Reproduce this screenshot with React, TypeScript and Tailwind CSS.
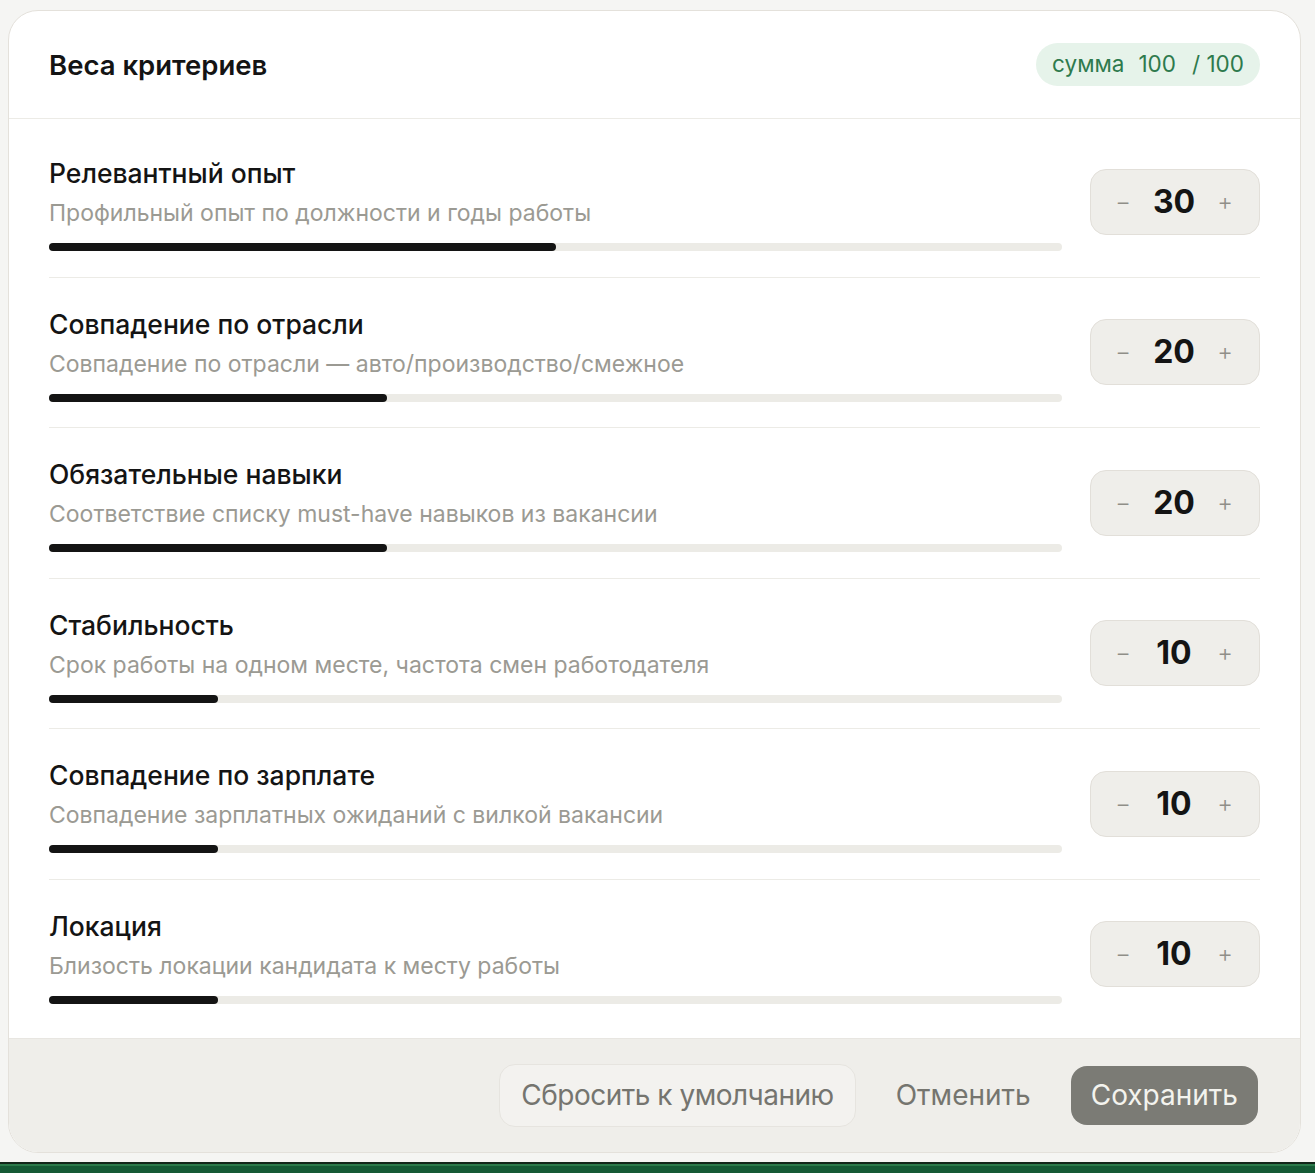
import React from "react";

const rows = [
  { title: "Релевантный опыт", desc: "Профильный опыт по должности и годы работы", value: 30 },
  { title: "Совпадение по отрасли", desc: "Совпадение по отрасли — авто/производство/смежное", value: 20 },
  { title: "Обязательные навыки", desc: "Соответствие списку must-have навыков из вакансии", value: 20 },
  { title: "Стабильность", desc: "Срок работы на одном месте, частота смен работодателя", value: 10 },
  { title: "Совпадение по зарплате", desc: "Совпадение зарплатных ожиданий с вилкой вакансии", value: 10 },
  { title: "Локация", desc: "Близость локации кандидата к месту работы", value: 10 },
];

export default function App() {
  return (
    <div
      className="min-h-screen bg-[#f5f5f3] pt-[10px]"
      style={{ fontFamily: "Inter, 'Noto Sans', sans-serif" }}
    >
      <div className="ml-[8px] w-[1293px] overflow-hidden rounded-[30px] border border-[#e4e1db] bg-white">
        <div className="flex h-[108px] items-center justify-between border-b border-[#ecebe6] px-10">
          <h2 className="text-[27.5px] font-semibold leading-8 text-[#141414]">Веса критериев</h2>
          <div className="flex h-[43px] items-center rounded-full bg-[#e6f3ea] px-4 text-[22.5px] leading-none text-[#2e7a4d]">
            <span>сумма</span>
            <span className="ml-[14px]">100</span>
            <span className="ml-[16px]">/ 100</span>
          </div>
        </div>
        <div className="px-10 py-2">
          {rows.map((r, i) => (
            <div
              key={i}
              className={`flex items-center gap-7 pt-[30px] ${i < rows.length - 1 ? "border-b border-[#ecebe6] pb-[25.5px]" : "pb-[26px]"}`}
            >
              <div className="flex-1">
                <div className="text-[26.5px] font-medium leading-8 text-[#141414]">{r.title}</div>
                <div className="mt-[9px] text-[23px] leading-[30px] text-[#9b9a93]">{r.desc}</div>
                <div className="mt-[15px] h-2 w-full rounded-full bg-[#ecebe6]">
                  <div className="h-2 rounded-full bg-[#141414]" style={{ width: `${(r.value / 60) * 100}%` }} />
                </div>
              </div>
              <div className="mb-[5px] flex h-[66px] w-[170px] items-center justify-between rounded-2xl border border-[#e2dfd9] bg-[#efeeea] pl-[24px] pr-[26px]">
                <span className="w-4 text-center text-[24px] font-light text-[#8f8e88]">−</span>
                <span className="text-[32px] font-bold leading-none text-[#141414]">{r.value}</span>
                <span className="w-4 text-center text-[24px] font-light text-[#8f8e88]">+</span>
              </div>
            </div>
          ))}
        </div>
        <div className="flex items-center justify-end gap-[20px] border-t border-[#e8e6e1] bg-[#efeeea] px-[42px] py-[25px]">
          <button className="h-[63px] rounded-2xl border border-[#e6e4df] bg-[#f3f2ef] px-[21px] text-[28px] tracking-[-0.5px] text-[#75756f]">
            Сбросить к умолчанию
          </button>
          <button className="h-[63px] px-5 text-[28px] text-[#75756f]">Отменить</button>
          <button className="h-[59px] rounded-2xl bg-[#7b7b75] px-[20px] text-[28px] text-[#f3f3ee]">
            Сохранить
          </button>
        </div>
      </div>
      <div className="mt-[9px] h-[2px] bg-[#13261a]" />
      <div className="h-[2px] bg-[#2b7a4a]" />
      <div className="h-[8px] bg-[#155a35]" />
    </div>
  );
}
